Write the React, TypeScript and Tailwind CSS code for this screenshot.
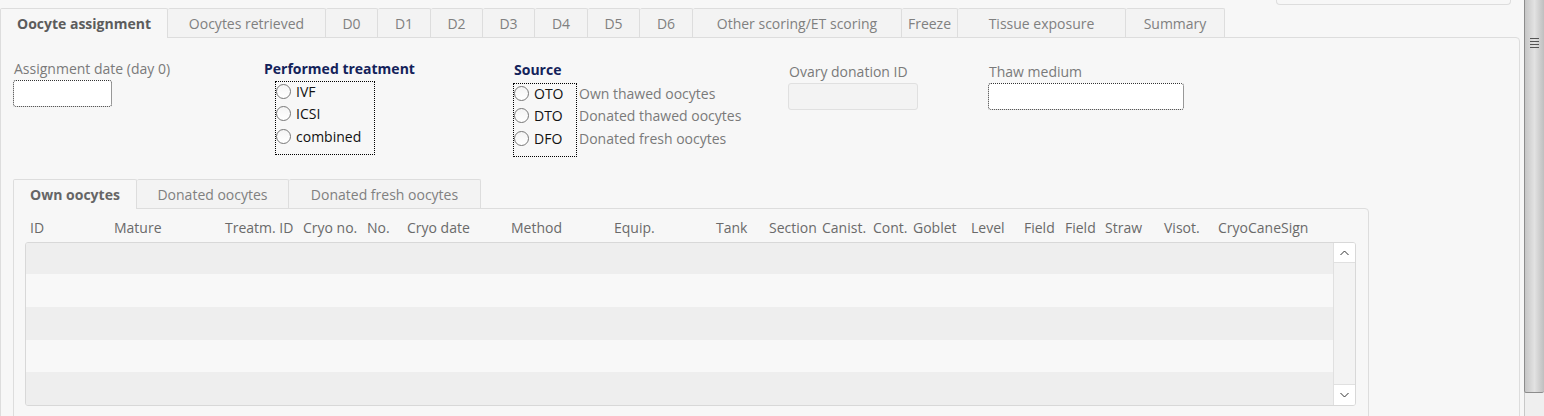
import React from "react";

const mainTabs = [
  { label: "Oocyte assignment", w: "w-[168px]", active: true },
  { label: "Oocytes retrieved", w: "w-[158px]" },
  { label: "D0", w: "w-[52px]" },
  { label: "D1", w: "w-[53px]" },
  { label: "D2", w: "w-[52px]" },
  { label: "D3", w: "w-[52px]" },
  { label: "D4", w: "w-[53px]" },
  { label: "D5", w: "w-[52px]" },
  { label: "D6", w: "w-[53px]" },
  { label: "Other scoring/ET scoring", w: "w-[209px]" },
  { label: "Freeze", w: "w-[56px]" },
  { label: "Tissue exposure", w: "w-[168px]" },
  { label: "Summary", w: "w-[99px]" },
];

const innerTabs = [
  { label: "Own oocytes", w: "w-[124px]", active: true },
  { label: "Donated oocytes", w: "w-[152px]" },
  { label: "Donated fresh oocytes", w: "w-[192px]" },
];

const columns = [
  { label: "ID", w: "w-[84px]" },
  { label: "Mature", w: "w-[111px]" },
  { label: "Treatm. ID", w: "w-[78px]" },
  { label: "Cryo no.", w: "w-[64px]" },
  { label: "No.", w: "w-[40px]" },
  { label: "Cryo date", w: "w-[104px]" },
  { label: "Method", w: "w-[103px]" },
  { label: "Equip.", w: "w-[102px]" },
  { label: "Tank", w: "w-[53px]" },
  { label: "Section", w: "w-[53px]" },
  { label: "Canist.", w: "w-[51px]" },
  { label: "Cont.", w: "w-[40px]" },
  { label: "Goblet", w: "w-[58px]" },
  { label: "Level", w: "w-[53px]" },
  { label: "Field", w: "w-[41px]" },
  { label: "Field", w: "w-[40px]" },
  { label: "Straw", w: "w-[59px]" },
  { label: "Visot.", w: "w-[54px]" },
  { label: "CryoCaneSign", w: "w-[100px]" },
];

const rows = [
  "h-[31px] bg-[#eeeeee] shrink-0",
  "h-[33px] bg-[#f8f8f8] shrink-0",
  "h-[33px] bg-[#eeeeee] shrink-0",
  "h-[32px] bg-[#f8f8f8] shrink-0",
  "h-[33px] bg-[#eeeeee] shrink-0",
];

function Radio() {
  return (
    <span className="w-[15px] h-[15px] rounded-full border border-[#777777] bg-gradient-to-b from-[#f4f4f4] to-[#ffffff] shrink-0" />
  );
}

function Chevron({ up }: { up?: boolean }) {
  return (
    <svg width="9" height="6" viewBox="0 0 9 6" className="block">
      <path
        d={up ? "M0.5 5 L4.5 1 L8.5 5" : "M0.5 1 L4.5 5 L8.5 1"}
        fill="none"
        stroke="#333333"
        strokeWidth="1"
      />
    </svg>
  );
}

export default function App() {
  return (
    <div className="w-[1544px] h-[416px] overflow-hidden bg-[#f7f7f7] flex items-start font-['Open_Sans',sans-serif] text-[14px]">
      <div className="w-[1524px] shrink-0 flex flex-col">
        {/* top strip with partially visible box */}
        <div className="h-[8px] shrink-0">
          <div className="ml-[1276px] w-[235px] h-[5px] border-x border-b border-[#dddddd] rounded-b-[4px]" />
        </div>

        {/* main tabs */}
        <div className="flex items-start h-[29px] shrink-0">
          {mainTabs.map((t, i) =>
            t.active ? (
              <div
                key={i}
                className={`${t.w} shrink-0 h-[30px] relative z-10 bg-[#f7f7f7] border-t border-l border-r border-[#dddddd] rounded-t-[2px] flex items-center justify-center pb-px font-bold text-[#5c5c5c]`}
              >
                {t.label}
              </div>
            ) : (
              <div
                key={i}
                className={`${t.w} shrink-0 h-[29px] bg-[#f3f3f3] border-t border-r border-[#dddddd] rounded-t-[2px] flex items-center justify-center text-[#808080]`}
              >
                {t.label}
              </div>
            )
          )}
        </div>

        {/* main panel */}
        <div className="w-[1520px] h-[400px] shrink-0 border border-[#dddddd] rounded-tr-[4px] flex flex-col">
          {/* form row */}
          <div className="flex items-start pt-[21px] shrink-0">
            <div className="ml-[12px] w-[251px] shrink-0 flex flex-col">
              <div className="pl-px leading-[20px] text-[#7a7a7a]">Assignment date (day 0)</div>
              <div className="mt-[1px] w-[99px] h-[27px] bg-white border border-dotted border-[#333333] rounded-[3px]" />
            </div>

            <div className="w-[249px] shrink-0 flex flex-col">
              <div className="leading-[20px] font-bold text-[#13225a]">Performed treatment</div>
              <div className="ml-[11px] mt-[2px] w-[100px] h-[74px] border border-dotted border-black flex flex-col">
                <div className="-mt-[2px] flex flex-col">
                  {["IVF", "ICSI", "combined"].map((l) => (
                    <div key={l} className="h-[22.5px] flex items-center gap-[5px] text-[#111111]">
                      <Radio />
                      <span>{l}</span>
                    </div>
                  ))}
                </div>
              </div>
            </div>

            <div className="w-[275px] shrink-0 flex flex-col">
              <div className="pt-px pl-px leading-[20px] font-bold text-[#13225a]">Source</div>
              <div className="mt-[3px] flex items-start">
                <div className="w-[64px] h-[74px] border border-dotted border-black flex flex-col">
                  <div className="-mt-[2px] flex flex-col">
                    {["OTO", "DTO", "DFO"].map((l) => (
                      <div key={l} className="h-[22.5px] flex items-center gap-[5px] text-[#111111]">
                        <Radio />
                        <span>{l}</span>
                      </div>
                    ))}
                  </div>
                </div>
                <div className="ml-[2px] -mt-[1px] flex flex-col text-[#7a7a7a]">
                  {["Own thawed oocytes", "Donated thawed oocytes", "Donated fresh oocytes"].map((l) => (
                    <div key={l} className="h-[22.5px] flex items-center">
                      {l}
                    </div>
                  ))}
                </div>
              </div>
            </div>

            <div className="w-[200px] shrink-0 pt-[3px] flex flex-col">
              <div className="pl-px leading-[20px] text-[#7a7a7a]">Ovary donation ID</div>
              <div className="mt-[1px] w-[130px] h-[27px] bg-[#f3f3f3] border border-[#e0e0e0] rounded-[3px]" />
            </div>

            <div className="pt-[3px] flex flex-col">
              <div className="pl-px leading-[20px] text-[#7a7a7a]">Thaw medium</div>
              <div className="mt-[1px] w-[196px] h-[27px] bg-white border border-dotted border-[#333333] rounded-[3px]" />
            </div>
          </div>

          {/* inner tabs */}
          <div className="ml-[12px] mt-[22px] shrink-0 flex flex-col">
            <div className="flex items-start h-[29px] shrink-0">
              {innerTabs.map((t, i) =>
                t.active ? (
                  <div
                    key={i}
                    className={`${t.w} shrink-0 h-[30px] relative z-10 bg-[#f7f7f7] border-t border-l border-r border-[#dddddd] rounded-t-[2px] flex items-center justify-center pb-px font-bold text-[#666666]`}
                  >
                    {t.label}
                  </div>
                ) : (
                  <div
                    key={i}
                    className={`${t.w} shrink-0 h-[29px] bg-[#f3f3f3] border-t border-r border-[#dddddd] rounded-t-[2px] flex items-center justify-center text-[#808080]`}
                  >
                    {t.label}
                  </div>
                )
              )}
            </div>

            <div className="w-[1356px] h-[220px] shrink-0 border border-[#dddddd] rounded-tr-[4px] flex flex-col">
              <div className="h-[33px] shrink-0 pt-[4px] pl-[16px] flex items-center text-[#6a6a6a]">
                {columns.map((c, i) => (
                  <div key={i} className={`${c.w} shrink-0 whitespace-nowrap`}>
                    {c.label}
                  </div>
                ))}
              </div>

              <div className="ml-[11px] w-[1331px] h-[164px] shrink-0 border border-[#d8d8d8] rounded-[3px] flex overflow-hidden">
                <div className="flex-1 flex flex-col">
                  {rows.map((r, i) => (
                    <div key={i} className={r} />
                  ))}
                </div>
                <div className="w-[22px] border-l border-[#e0e0e0] flex flex-col bg-[#f3f3f3]">
                  <div className="h-[20px] shrink-0 bg-white border-b border-[#e0e0e0] flex items-center justify-center">
                    <Chevron up />
                  </div>
                  <div className="flex-1" />
                  <div className="h-[21px] shrink-0 bg-white border-t border-[#e0e0e0] flex items-center justify-center">
                    <Chevron />
                  </div>
                </div>
              </div>
            </div>
          </div>
        </div>
      </div>

      {/* page scrollbar */}
      <div className="w-[20px] h-[416px] shrink-0 flex flex-col">
        <div className="h-[393px] shrink-0 border-l border-b border-[#8c8c8c] rounded-b-[2px] bg-gradient-to-r from-[#c6c6c6] via-[#e2e2e2] to-[#bfbfbf] flex flex-col items-center pt-[38px] pr-[1px]">
          <div className="flex flex-col gap-[2px]">
            <div className="w-[9px] h-px bg-[#555555]" />
            <div className="w-[9px] h-px bg-[#555555]" />
            <div className="w-[9px] h-px bg-[#555555]" />
            <div className="w-[9px] h-px bg-[#555555]" />
          </div>
        </div>
        <div className="flex-1 border-l border-[#c8c8c8] bg-[#efefef]" />
      </div>
    </div>
  );
}
